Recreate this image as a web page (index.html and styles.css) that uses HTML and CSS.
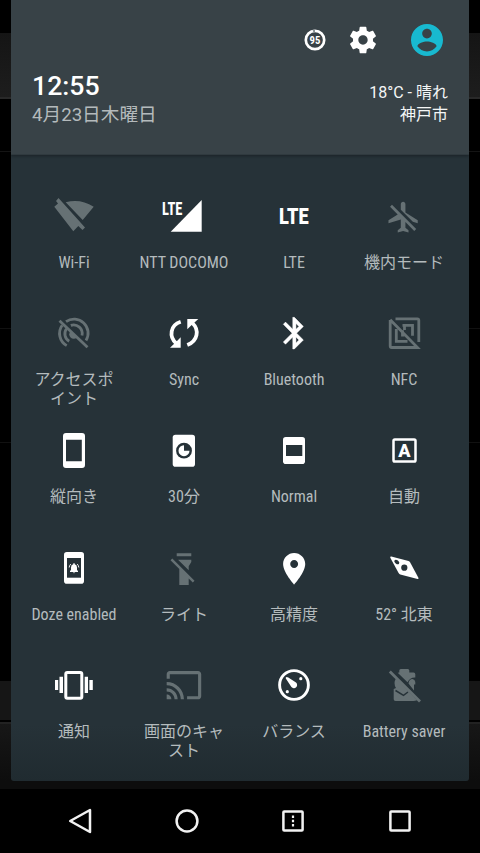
FILE: index.html
```html
<!DOCTYPE html>
<html lang="ja">
<head>
<meta charset="utf-8">
<title>Quick Settings</title>
<link rel="stylesheet" href="styles.css">
</head>
<body>
<div class="screen">
  <main class="panel">
    <header class="header">
      <div class="actions">
        <svg class="battery" viewBox="0 0 22 22"><circle cx="11" cy="11" r="9.2" fill="none" stroke="#fff" stroke-width="2.7"/><path d="M9 2.1Q10 1.8 11 1.8" fill="none" stroke="#899194" stroke-width="2.7"/><text x="5.6" y="15" font-size="11.4" textLength="10.8" lengthAdjust="spacingAndGlyphs">95</text></svg>
        <svg class="gear" viewBox="0 0 24 24"><path d="M19.43 12.98c.04-.32.07-.64.07-.98s-.03-.66-.07-.98l2.11-1.65c.19-.15.24-.42.12-.64l-2-3.46c-.12-.22-.39-.3-.61-.22l-2.49 1c-.52-.4-1.08-.73-1.69-.98l-.38-2.65C14.46 2.18 14.25 2 14 2h-4c-.25 0-.46.18-.49.42l-.38 2.65c-.61.25-1.17.59-1.69.98l-2.49-1c-.23-.09-.49 0-.61.22l-2 3.46c-.13.22-.07.49.12.64l2.11 1.65c-.04.32-.07.65-.07.98s.03.66.07.98l-2.11 1.65c-.19.15-.24.42-.12.64l2 3.46c.12.22.39.3.61.22l2.49-1c.52.4 1.08.73 1.69.98l.38 2.65c.03.24.24.42.49.42h4c.25 0 .46-.18.49-.42l.38-2.65c.61-.25 1.17-.59 1.69-.98l2.49 1c.23.09.49 0 .61-.22l2-3.46c.12-.22.07-.49-.12-.64l-2.11-1.65zM12 15.5c-1.93 0-3.5-1.57-3.5-3.5s1.57-3.5 3.5-3.5 3.5 1.57 3.5 3.5-1.57 3.5-3.5 3.5z"/></svg>
        <svg class="account" viewBox="2 2 20 20"><path d="M12 2C6.48 2 2 6.48 2 12s4.48 10 10 10 10-4.48 10-10S17.52 2 12 2zm0 3c1.66 0 3 1.34 3 3s-1.34 3-3 3-3-1.34-3-3 1.34-3 3-3zm0 14.2c-2.5 0-4.71-1.28-6-3.22.03-1.99 4-3.08 6-3.08 1.99 0 5.97 1.09 6 3.08-1.29 1.94-3.5 3.22-6 3.22z"/></svg>
      </div>
      <div class="info">
        <div>
          <div class="clock">12:55</div>
          <div class="date">4月23日木曜日</div>
        </div>
        <div class="weather">18°C - 晴れ<br>神戸市</div>
      </div>
    </header>

    <section class="tiles">
      <div class="tile off">
        <svg viewBox="0 0 40 40"><path d="M4.5 2 31 31.5 28.5 34 24.3 30 19.3 35.3.3 10.7 4 7.5 2 5ZM11.7 6.3Q26 2 39.7 10.7L28.7 24Z"/></svg>
        <span class="label">Wi-Fi</span>
      </div>
      <div class="tile">
        <svg viewBox="0 0 40 40"><path d="M37.7 4v31.7H6.7Z"/><text x="-2" y="18.7" font-size="18.7" textLength="20.5" lengthAdjust="spacingAndGlyphs">LTE</text></svg>
        <span class="label">NTT DOCOMO</span>
      </div>
      <div class="tile">
        <svg viewBox="0 0 40 40"><text class="heavy" x="5" y="27.7" font-size="21.5" textLength="29.6" lengthAdjust="spacingAndGlyphs">LTE</text></svg>
        <span class="label">LTE</span>
      </div>
      <div class="tile off">
        <svg viewBox="0 0 40 40"><path transform="translate(1.4 2.6) scale(1.54)" d="M13 9V3.5c0-.83-.67-1.5-1.5-1.5S10 2.67 10 3.5v3.68l7.83 7.83L21 16v-2l-8-5zM3 5.27l4.99 4.99L2 14v2l8-2.5V19l-2 1.5V22l3.5-1 3.5 1v-1.5L13 19v-3.73L18.73 21 20 19.73 4.27 4 3 5.27z"/></svg>
        <span class="label">機内モード</span>
      </div>

      <div class="tile off">
        <svg viewBox="0 0 40 40"><g class="line"><path d="M12.7 32.6A14 14 0 0 1 8.2 12.2M12 8.7A14 14 0 0 1 32 27.5M15.2 28.3A8.7 8.7 0 0 1 12.5 15.7M16.8 12.3A8.7 8.7 0 0 1 28 22.5"/><path d="m5.5 7.8 28 26.5"/></g><path d="m16.5 18.2 6.4 6.2a3.8 3.8 0 1 1-6.4-6.2Z"/></svg>
        <span class="label">アクセスポ<br>イント</span>
      </div>
      <div class="tile">
        <svg viewBox="0 0 40 40"><path d="M6 34.7h10.7V24.3l-3.4 3.4ZM34.3 6H23.3v10.3l3.6-3.5Z"/><path class="stroke" stroke-width="3.8" d="M16.7 8.8C6.3 12.2 4.5 23.5 12.4 30.5M23.3 32C33.8 28 35.6 17 28.4 10"/></svg>
        <span class="label">Sync</span>
      </div>
      <div class="tile">
        <svg viewBox="0 0 40 40"><path transform="translate(1.4 1.2) scale(1.58)" stroke="#fff" stroke-width=".3" d="M17.71 7.71 12 2h-1v7.59L6.41 5 5 6.41 10.59 12 5 17.59 6.41 19 11 14.41V22h1l5.71-5.71-4.3-4.29 4.3-4.29zM13 5.83l1.88 1.88L13 9.59V5.83zm1.88 10.46L13 18.17v-3.76l1.88 1.88z"/></svg>
        <span class="label">Bluetooth</span>
      </div>
      <div class="tile off">
        <svg viewBox="0 0 40 40"><g class="line"><path d="M11.5 5.8H33.3Q34.8 5.8 34.8 7.3V29"/><path d="M6.2 7V33Q6.2 34.5 7.7 34.5H33.5L6.2 6.8"/><path d="M12.3 16V28.3H23.5M18.5 17.2V22.2H20.5M18.5 12.3H28.5V22.8M20.5 12.5V17"/></g></svg>
        <span class="label">NFC</span>
      </div>

      <div class="tile">
        <svg viewBox="0 0 40 40"><path fill-rule="evenodd" d="M12 3H28Q31 3 31 6V35Q31 38 28 38H12Q9 38 9 35V6Q9 3 12 3ZM12 9.7V31.3H27.8V9.7Z"/></svg>
        <span class="label">縦向き</span>
      </div>
      <div class="tile">
        <svg viewBox="0 0 40 40"><rect x="8.7" y="4.7" width="22.3" height="32" rx="2.8"/><circle class="cut" cx="20" cy="20.7" r="7.9"/><path d="M20 15.2V20.7H25.5A5.5 5.5 0 1 1 20 15.2Z"/></svg>
        <span class="label">30分</span>
      </div>
      <div class="tile">
        <svg viewBox="0 0 40 40"><rect x="9" y="7" width="22" height="27" rx="2.8"/><path class="cut" d="M12 15H28.3V26H12Z"/></svg>
        <span class="label">Normal</span>
      </div>
      <div class="tile">
        <svg viewBox="0 0 40 40"><rect class="stroke" x="9.5" y="9.5" width="22" height="22" rx="1.3" stroke-width="2.5"/><text x="14" y="27.3" font-size="18.7" textLength="12.8" lengthAdjust="spacingAndGlyphs">A</text></svg>
        <span class="label">自動</span>
      </div>

      <div class="tile">
        <svg viewBox="0 0 40 40"><rect x="10" y="4" width="20" height="31.7" rx="2.8"/><path class="cut" d="M13 10H27V29.7H13Z"/><path d="M16 24V23L17 22V19.5Q17 16.8 19.3 16.3V15.3H20.7V16.3Q23 16.8 23 19.5V22L24 23V24ZM18.7 24.5H21.3Q20 26 18.7 24.5Z"/><path class="stroke" stroke-width=".9" d="M15.2 19.5Q15.4 17.3 16.8 16M24.8 19.5Q24.6 17.3 23.2 16"/></svg>
        <span class="label">Doze enabled</span>
      </div>
      <div class="tile off">
        <svg viewBox="0 0 40 40"><path d="M12.7 5.3H27.3V8.3H12.7ZM14.3 11.7H27.3V14L24.7 18.3V22.2L14.3 12ZM6.5 12.2 8.3 10.5 30.5 32.7 28.8 34.6 24.7 30.5V37H15.3V21Z"/></svg>
        <span class="label">ライト</span>
      </div>
      <div class="tile">
        <svg viewBox="0 0 40 40"><path transform="translate(1.2 1.8) scale(1.58)" d="M12 2C8.13 2 5 5.13 5 9c0 5.25 7 13 7 13s7-7.75 7-13c0-3.87-3.13-7-7-7zm0 9.5c-1.38 0-2.5-1.12-2.5-2.5s1.12-2.5 2.5-2.5 2.5 1.12 2.5 2.5-1.12 2.5-2.5 2.5z"/></svg>
        <span class="label">高精度</span>
      </div>
      <div class="tile">
        <svg viewBox="0 0 40 40"><path d="M7.3 8.5 24.5 13Q25.5 13.3 26.2 14.5L34.5 30Q34.8 31.2 33.5 31L16.3 26.5Q15.3 26.2 14.6 25L6.3 9.7Q6 8.3 7.3 8.5Z"/><circle class="cut" cx="20.3" cy="19.7" r="3.1"/><ellipse class="cut" cx="12.8" cy="14" rx="2.8" ry="1.8" transform="rotate(38 12.8 14)"/></svg>
        <span class="label">52° 北東</span>
      </div>

      <div class="tile">
        <svg viewBox="0 0 40 40"><rect class="stroke" x="11.8" y="7.5" width="16" height="25.7" rx="1.5" stroke-width="3"/><path d="M5.5 11.7H9V28H5.5ZM1 15H4.2V25H1ZM30.7 11.7H34V28H30.7ZM35.4 15H38.8V25H35.4Z"/></svg>
        <span class="label">通知</span>
      </div>
      <div class="tile off">
        <svg viewBox="0 0 40 40"><path transform="translate(1.1 1.3) scale(1.57)" d="M21 3H3c-1.1 0-2 .9-2 2v3h2V5h18v14h-7v2h7c1.1 0 2-.9 2-2V5c0-1.1-.9-2-2-2zM1 18v3h3c0-1.66-1.34-3-3-3zm0-4v2c2.76 0 5 2.24 5 5h2c0-3.87-3.13-7-7-7zm0-4v2c4.97 0 9 4.03 9 9h2c0-6.08-4.93-11-11-11z"/></svg>
        <span class="label">画面のキャ<br>スト</span>
      </div>
      <div class="tile">
        <svg viewBox="0 0 40 40"><circle class="stroke" cx="20" cy="20" r="14.4" stroke-width="2.9"/><path d="M11.8 13.5Q11.3 12 12.7 11.9L14.3 12.6 22 17.6A3.2 3.2 0 1 1 17.4 22Z"/><circle cx="26.8" cy="13.7" r="1.6"/><circle cx="13.3" cy="26.7" r="1.6"/></svg>
        <span class="label">バランス</span>
      </div>
      <div class="tile off">
        <svg viewBox="0 0 40 40"><path d="M15.3 7.5V5.5Q15.3 4 16.8 4H23.8Q25.3 4 25.3 5.5V7.5H29.5Q31.3 7.5 31.3 9.3V12.5Q26 12.2 23.5 17.3L13.7 7.7ZM24.5 18.5Q25 14 28.5 14Q31 14.5 31.3 17V19.5H30V25.5ZM12 13.5 33 35.2Q31 36 29.5 36H11.5Q9.7 36 9.7 34.2V24L12 23Q9 18 12 13.5Z"/><path class="cutline" d="M11.5 25.5 19.5 30.3 24 27"/><path class="line" d="m5.8 6.4 30.2 30"/></svg>
        <span class="label">Battery saver</span>
      </div>
    </section>
  </main>

  <nav class="nav">
    <svg viewBox="0 0 28 28"><path d="M4.2 14 24 3V25Z"/></svg>
    <svg viewBox="0 0 28 28"><circle cx="14" cy="14" r="10.4"/></svg>
    <svg viewBox="0 0 28 28"><rect x="4.4" y="4.4" width="19.2" height="19.2" rx=".8"/><path class="dots" d="M14 8.6v2.4M14 12.8v2.4M14 17v2.4"/></svg>
    <svg viewBox="0 0 28 28"><rect x="4.4" y="4.4" width="19.2" height="19.2" rx=".8"/></svg>
  </nav>
</div>
</body>
</html>
```
FILE: styles.css
```css
* { box-sizing: border-box; }
body { margin: 0; background: #000; }
svg { display: block; overflow: visible; fill: #fff; }
svg text { font-weight: 700; font-family: Roboto, sans-serif; font-stretch: 75%; }
svg .heavy { font-weight: 900; font-stretch: 100%; }

.screen {
  width: 480px;
  height: 853px;
  display: flex;
  flex-direction: column;
  align-items: center;
  overflow: hidden;
  font-family: Roboto, "Noto Sans CJK JP", sans-serif;
  background: linear-gradient(#000 0 33px, #151515 33px, #1d1d1d 97px, #292929 97px 99px, #000 99px 151px, #141414 151px 152px, #000 152px 328px, #111 328px 329px, #000 329px 442px, #111 442px 443px, #000 443px 681px, #161616 681px 720px, #000 720px 722px, #222 722px 724px, #171717 724px, #0d0d0d 781px 789px, #000 789px);
}

.panel {
  width: 458px;
  height: 781px;
  border-radius: 0 0 3px 3px;
  overflow: hidden;
  background: linear-gradient(#263238 0 725px, #202b30 781px);
}

.header {
  height: 155px;
  padding: 24px 21px 0;
  background: #384247;
  border-bottom: 1px solid #303a3f;
  box-shadow: 0 1px 3px #0005;
  color: #fff;
}
.actions { display: flex; justify-content: flex-end; align-items: center; height: 32px; padding-right: 5px; }
.battery { width: 22px; height: 22px; margin-right: 21px; }
.gear { width: 32px; height: 32px; margin-right: 32px; }
.account { width: 32px; height: 32px; fill: #18b9d0; }
.info { display: flex; justify-content: space-between; padding-top: 14px; }
.clock { font-size: 26.67px; font-weight: 500; line-height: 32px; }
.date { font-size: 18.67px; line-height: 27px; color: #b4babc; font-weight: 400; }
.weather { margin-top: 12px; font-size: 16px; line-height: 21.5px; text-align: right; font-weight: 400; color: #f4f6f6; }

.tiles {
  display: grid;
  grid-template-columns: repeat(4, 110px);
  grid-template-rows: 117px 117px 118px 117px 117px;
  justify-content: center;
  padding: 41px 2px 0 0;
}
.tile { display: flex; flex-direction: column; align-items: center; }
.tile svg { width: 40px; height: 40px; }
.off svg { fill: #667174; }
.label {
  margin-top: 18px;
  font-size: 16px;
  font-stretch: 75%;
  font-weight: 400;
  line-height: 18.7px;
  text-align: center;
  white-space: nowrap;
  color: #b4bbbd;
}
.tile .stroke { fill: none; stroke: #fff; }
.tile .line { fill: none; stroke: #667174; stroke-width: 2.8; }
.tile .cut { fill: #263238; }
.tile .cutline { fill: none; stroke: #263238; stroke-width: 1.5; }

.nav {
  width: 100%;
  height: 64px;
  margin-top: 8px;
  display: flex;
  justify-content: space-around;
  align-items: center;
  padding: 0 26.67px;
  background: #000;
}
.nav svg { width: 28px; height: 28px; fill: none; stroke: #f2f2f2; stroke-width: 2.5; stroke-linejoin: round; }
.nav .dots { stroke-width: 2.2; }
```
